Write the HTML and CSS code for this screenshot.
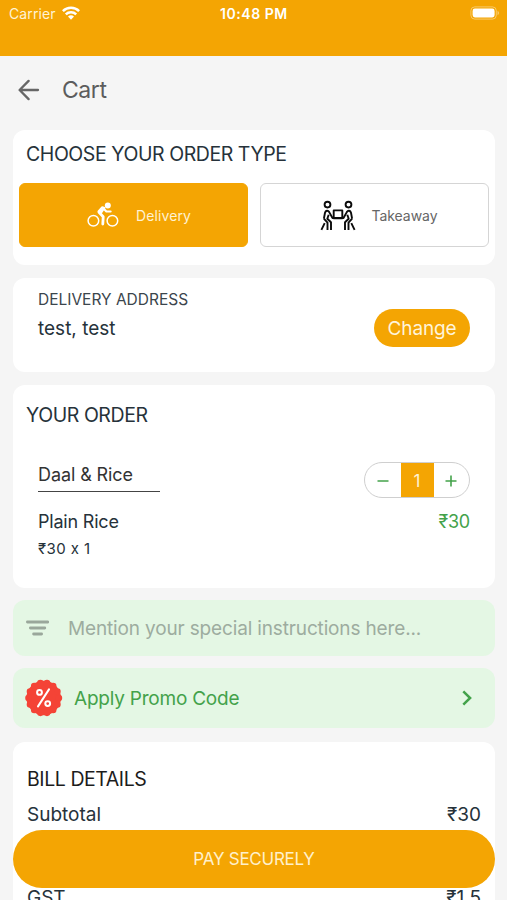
FILE: index.html
```html
<!DOCTYPE html>
<html lang="en">
<head>
<meta charset="utf-8">
<title>Cart</title>
<link rel="stylesheet" href="styles.css">
</head>
<body>
<div class="status">
  <span class="carrier">Carrier</span>
  <svg class="wifi" width="18" height="14" viewBox="0 0 18 14" fill="none" stroke="#fff" stroke-width="2.5"><path d="M.9 5.1a11.5 11.5 0 0 1 16.2 0M3.8 8.3a7.4 7.4 0 0 1 10.4 0"/><path d="M9 13.7 6 10.6a4.3 4.3 0 0 1 6 0z" fill="#fff" stroke="none"/></svg>
  <span class="time">10:48 PM</span>
  <svg class="battery" width="30" height="14" viewBox="0 0 30 14"><rect x=".9" y=".9" width="25.4" height="12.2" rx="3.8" fill="none" stroke="#fff" stroke-opacity=".4"/><rect x="2.6" y="2.6" width="22" height="8.8" rx="2.3" fill="#fff"/><path d="M27.6 4.8c1.7.7 1.7 3.7 0 4.4z" fill="#fff" fill-opacity=".5"/></svg>
</div>
<header class="header">
  <svg width="22" height="22" viewBox="0 0 22 22" fill="none" stroke="#666" stroke-width="2.3" stroke-linecap="round" stroke-linejoin="round"><path d="M20 11H2M10.6 1.9 1.6 11l9 9.1"/></svg>
  <h1>Cart</h1>
</header>
<main>
  <section class="card type">
    <h2>CHOOSE YOUR ORDER TYPE</h2>
    <div class="options">
      <button class="option active">
        <svg width="32" height="26" viewBox="0 0 32 26" fill="none" stroke="#fff"><circle cx="6.4" cy="18.8" r="5.3" stroke-width="1.5"/><circle cx="25.4" cy="18.8" r="5.3" stroke-width="1.5"/><circle cx="20.8" cy="3.6" r="3" fill="#fff" stroke="none"/><g stroke-linejoin="round" stroke-linecap="round"><path d="m12 10.200 4.200 4.600-.4 7.200" stroke-width="2.800"/><path d="m16 6 3.400 3.500h4.200" stroke-width="2.200"/><path d="m11.400 9.400 3.800-4.200 2.400.6-3.400 5z" fill="#fff" stroke-width="1.800"/></g></svg>
        <span>Delivery</span>
      </button>
      <button class="option">
        <svg width="36" height="31" viewBox="0 0 36 31" fill="none" stroke="#0b0b0b" stroke-width="1.900" stroke-linejoin="round"><g id="person"><circle cx="7.500" cy="4.600" r="2.900"/><path d="M11 22.300 7.300 18.800l1.400-4M3.900 18.600 5 12.800c.6-2.400 3-2.700 4.200-.7l3.300 5.900h5.700M3.900 18.600l3.600 4v7.400M11 21.800v8.200M4.700 23.200 1.400 29.800"/></g><use href="#person" transform="matrix(-1 0 0 1 36 0)"/><rect x="13.700" y="10.400" width="8.600" height="7.800"/></svg>
        <span>Takeaway</span>
      </button>
    </div>
  </section>
  <section class="card address">
    <div>
      <p class="label">DELIVERY ADDRESS</p>
      <p class="place">test, test</p>
    </div>
    <button class="change">Change</button>
  </section>
  <section class="card order">
    <h2>YOUR ORDER</h2>
    <div class="item">
      <h3>Daal &amp; Rice</h3>
      <div class="stepper">
        <button aria-label="Less"><svg width="12" height="12" viewBox="0 0 12 12" stroke="#43a24a" stroke-width="1.600"><path d="M.5 6h11"/></svg></button>
        <b>1</b>
        <button aria-label="More"><svg width="12" height="12" viewBox="0 0 12 12" stroke="#43a24a" stroke-width="1.600"><path d="M.5 6h11M6 .5v11"/></svg></button>
      </div>
    </div>
    <div class="line"><span class="dish">Plain Rice</span><span class="price">₹30</span></div>
    <p class="calc">₹30 x 1</p>
  </section>
  <section class="strip note">
    <svg width="24" height="16" viewBox="0 0 24 16" fill="none" stroke="#9aa79b" stroke-width="2.800" stroke-linecap="round"><path d="M2.400 2h20.400M5.400 8h14.400M8.600 14h8"/></svg>
    <span>Mention your special instructions here...</span>
  </section>
  <section class="strip promo">
    <svg width="38" height="38" viewBox="0 0 38 38" fill="none"><circle cx="18.700" cy="19" r="17.300" fill="#f44336"/><circle cx="18.700" cy="19" r="15.200" pathLength="14" stroke="#f44336" stroke-width="6.600" stroke-linecap="round" stroke-dasharray="0 1"/><g stroke="#fff" stroke-width="2" stroke-linecap="round"><path d="m13 27.400 11-17"/><circle cx="14.500" cy="13.400" r="2.400"/><circle cx="22.700" cy="24.600" r="2.400"/></g></svg>
    <span>Apply Promo Code</span>
    <svg class="chevron" width="10" height="16" viewBox="0 0 10 16" fill="none" stroke="#43a24a" stroke-width="2.500"><path d="m1.300 1.300 6.800 6.700-6.800 6.700"/></svg>
  </section>
  <section class="card bill">
    <h2>BILL DETAILS</h2>
    <div class="row"><span>Subtotal</span><span>₹30</span></div>
    <div class="row gst"><span>GST</span><span>₹1.5</span></div>
  </section>
</main>
<button class="pay">PAY SECURELY</button>
</body>
</html>
```

FILE: styles.css
```css
* { box-sizing: border-box; }
html, body { height: 900px; overflow: hidden; }
body { margin: 0; background: #f5f5f5; color: #26323a; font-family: Inter, "Liberation Sans", sans-serif; font-feature-settings: "calt" 0; white-space: nowrap; }
h1, h2, h3, p { margin: 0; font-weight: 400; }
button { font: inherit; border: 0; padding: 0; background: none; display: flex; align-items: center; justify-content: center; }
svg { display: block; flex: none; }

.status { height: 56px; padding: 4px 6px 0 9px; background: #f4a503; color: #fff; display: grid; grid-template-columns: 53px 158px auto 1fr; align-items: start; line-height: 20px; }
.carrier { font-size: 14px; letter-spacing: 0.1px; color: #fff3d5; }
.wifi { margin-top: 2px; }
.time { font-size: 14px; font-weight: 600; letter-spacing: 0.55px; }
.battery { justify-self: end; margin: 2px 1px 0 0; }

.header { height: 74px; padding: 0 18px 6px; display: flex; align-items: center; gap: 22px; color: #5c5c5c; }
h1 { font-size: 23px; line-height: 30px; letter-spacing: -0.45px; }

main { padding: 0 12px 0 13px; }
.card { background: #fff; border-radius: 12px; }
h2 { font-size: 19.5px; line-height: 24px; letter-spacing: -0.43px; }

.type { height: 135px; padding: 12px 6px; }
.type h2 { padding-left: 7px; }
.options { display: grid; grid-template-columns: 1fr 1fr; gap: 12px; margin-top: 17px; }
.option { height: 64px; border-radius: 6px; border: 1.5px solid #d5d5d5; font-size: 14px; gap: 16px; color: #666; letter-spacing: -0.05px; }
.option.active { background: #f4a503; border-color: #f4a503; color: #fff2d2; gap: 17px; padding-left: 11px; letter-spacing: 0.1px; }
.option:last-child { padding-left: 8px; }

.address { margin-top: 13px; height: 94px; padding: 12px 25px; display: flex; justify-content: space-between; }
.label { font-size: 15.5px; line-height: 20px; color: #3b454c; }
.place { font-size: 19px; line-height: 26px; margin-top: 6px; }
.change { width: 96px; height: 38px; border-radius: 19px; background: #f4a503; color: #fff4da; font-size: 19px; letter-spacing: -0.15px; margin-top: 19px; }

.order { margin-top: 13px; height: 203px; padding: 18px 25px 0; }
.order h2 { margin-left: -12px; }
.item { display: flex; justify-content: space-between; margin-top: 35px; }
h3 { width: 122px; height: 30px; border-bottom: 1.5px solid #444; font-size: 18px; line-height: 25px; letter-spacing: -0.1px; color: #333; }
.stepper { width: 106px; height: 36px; border: 1.5px solid #cfcfcf; border-radius: 18px; display: grid; grid-template-columns: 1fr 33px 1fr; overflow: hidden; }
.stepper b { background: #f4a503; color: #fff2d2; font-weight: 400; font-size: 17px; line-height: 36px; text-align: center; }
.line { display: flex; justify-content: space-between; font-size: 18px; line-height: 24px; letter-spacing: -0.2px; margin-top: 12px; }
.price { color: #43a24a; }
.calc { font-size: 15px; line-height: 20px; letter-spacing: 0.4px; margin-top: 5px; }

.strip { background: #e4f7e4; border-radius: 12px; display: flex; align-items: center; padding: 0 23px 0 12px; margin-top: 12px; font-size: 19px; }
.strip span { padding-top: 1px; }
.note { height: 56px; color: #9dac9f; gap: 19px; letter-spacing: -0.15px; }
.promo { height: 60px; color: #43a24a; gap: 11px; letter-spacing: -0.22px; }
.chevron { margin-left: auto; }

.bill { margin-top: 14px; height: 158px; border-radius: 12px 12px 0 0; overflow: hidden; padding: 25px 14px 0; }
.bill h2 { color: #1c1c1c; }
.row { display: flex; justify-content: space-between; font-size: 19px; line-height: 24px; margin-top: 12px; }
.gst { margin-top: 59px; }

.pay { position: fixed; left: 13px; right: 12px; top: 830px; height: 58px; border-radius: 29px; background: #f4a503; color: #fff0cb; font-size: 17px; letter-spacing: -0.25px; }
```
